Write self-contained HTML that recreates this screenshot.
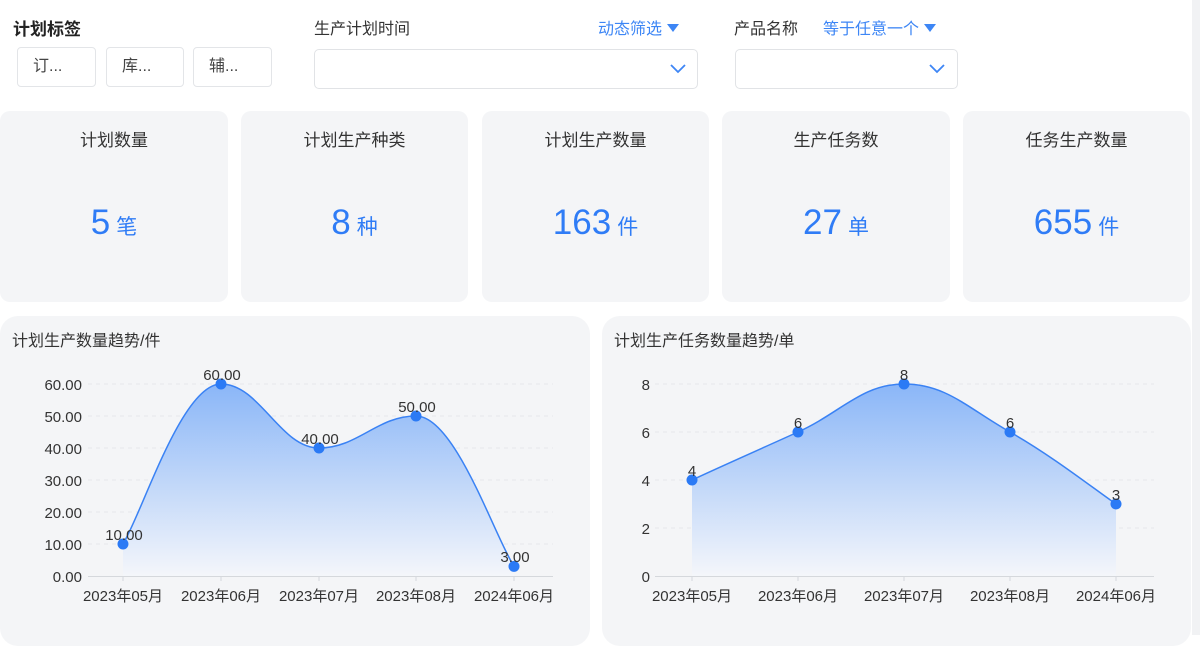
<!DOCTYPE html>
<html><head><meta charset="utf-8"><style>
*{margin:0;padding:0;box-sizing:border-box}
body{width:1200px;height:635px;overflow:hidden;background:#fff;font-family:"Liberation Sans","Noto Sans CJK SC",sans-serif;color:#333;position:relative}
.abs{position:absolute}
.tag{position:absolute;top:47px;height:40px;border:1px solid #e3e5e8;border-radius:4px;font-size:16px;color:#444;line-height:38px;padding-left:15px}
.sel{position:absolute;top:49px;height:40px;border:1px solid #e1e3e6;border-radius:5px;background:#fff}
.card{position:absolute;top:111px;height:191px;background:#f4f5f7;border-radius:10px;text-align:center}
.card .t{margin-top:15px;font-size:17px;color:#333}
.card .v{margin-top:52px;font-size:35px;color:#2f7cf6}
.card .v span{font-size:21px;margin-left:6px}
.panel{position:absolute;top:316px;height:330px;background:#f4f5f7;border-radius:18px}
svg text{font-family:"Liberation Sans","Noto Sans CJK SC",sans-serif}
.tri{display:inline-block;width:0;height:0;border-left:6px solid transparent;border-right:6px solid transparent;border-top:8px solid #3d86f5;margin-left:5px;vertical-align:2px}
</style></head><body>
<div class="abs" style="left:13px;top:15px;font-size:17px;font-weight:bold;color:#222">计划标签</div>
<div class="tag" style="left:17px;width:79px">订...</div>
<div class="tag" style="left:106px;width:78px">库...</div>
<div class="tag" style="left:193px;width:79px">辅...</div>
<div class="abs" style="left:314px;top:15px;font-size:16px;color:#333">生产计划时间</div>
<div class="abs" style="left:598px;top:15px;font-size:16px;color:#3d86f5">动态筛选<span class="tri"></span></div>
<div class="sel" style="left:314px;width:384px"><svg class="abs" style="left:355px;top:14px" width="16" height="10"><path d="M1 1 L8 8 L15 1" stroke="#3d86f5" stroke-width="1.8" fill="none"/></svg></div>
<div class="abs" style="left:734px;top:15px;font-size:16px;color:#333">产品名称</div>
<div class="abs" style="left:823px;top:15px;font-size:16px;color:#3d86f5">等于任意一个<span class="tri"></span></div>
<div class="sel" style="left:735px;width:223px"><svg class="abs" style="left:193px;top:14px" width="16" height="10"><path d="M1 1 L8 8 L15 1" stroke="#3d86f5" stroke-width="1.8" fill="none"/></svg></div>
<div class="abs" style="left:1192px;top:0;width:8px;height:635px;background:#f1f2f4"></div>

<div class="card" style="left:0;width:228px"><div class="t">计划数量</div><div class="v">5<span>笔</span></div></div>
<div class="card" style="left:241px;width:227px"><div class="t">计划生产种类</div><div class="v">8<span>种</span></div></div>
<div class="card" style="left:482px;width:227px"><div class="t">计划生产数量</div><div class="v">163<span>件</span></div></div>
<div class="card" style="left:722px;width:228px"><div class="t">生产任务数</div><div class="v">27<span>单</span></div></div>
<div class="card" style="left:963px;width:227px"><div class="t">任务生产数量</div><div class="v">655<span>件</span></div></div>

<div class="panel" style="left:0;width:590px"></div>
<div class="panel" style="left:602px;width:589px"></div>

<svg class="abs" style="left:0;top:0" width="1200" height="635">
<defs><linearGradient id="g" x1="0" y1="0" x2="0" y2="1"><stop offset="0" stop-color="#8ab6f8"/><stop offset="1" stop-color="#f4f6fa"/></linearGradient></defs>
<text x="12" y="346" font-size="16" fill="#333">计划生产数量趋势/件</text>
<text x="614" y="346" font-size="16" fill="#333">计划生产任务数量趋势/单</text>
<g stroke="#e6e8eb" stroke-dasharray="4 4" stroke-width="1">
<line x1="88" x2="553" y1="384" y2="384"/><line x1="88" x2="553" y1="416" y2="416"/><line x1="88" x2="553" y1="448" y2="448"/><line x1="88" x2="553" y1="480" y2="480"/><line x1="88" x2="553" y1="512" y2="512"/><line x1="88" x2="553" y1="544" y2="544"/>
<line x1="655" x2="1154" y1="384" y2="384"/><line x1="655" x2="1154" y1="432" y2="432"/><line x1="655" x2="1154" y1="480" y2="480"/><line x1="655" x2="1154" y1="528" y2="528"/>
</g>
<path d="M123 544 C142.6 512 181.8 384 221 384 C260 384 280 448 319 448 C358 448 377 416 416 416 C455 416 494.4 536 514 566.4 L514 576 L123 576Z" fill="url(#g)"/>
<path d="M123 544 C142.6 512 181.8 384 221 384 C260 384 280 448 319 448 C358 448 377 416 416 416 C455 416 494.4 536 514 566.4" fill="none" stroke="#3a82f4" stroke-width="1.5"/>
<path d="M692 480 C713 470 755.6 451.2 798 432 C840.4 412.8 862 384 904 384 C946 384 967.6 408 1010 432 C1052.4 456 1095 489.6 1116 504 L1116 576 L692 576Z" fill="url(#g)"/>
<path d="M692 480 C713 470 755.6 451.2 798 432 C840.4 412.8 862 384 904 384 C946 384 967.6 408 1010 432 C1052.4 456 1095 489.6 1116 504" fill="none" stroke="#3a82f4" stroke-width="1.5"/>
<g stroke="#d5d8dc"><line x1="88" x2="553" y1="576.5" y2="576.5"/><line x1="655" x2="1154" y1="576.5" y2="576.5"/>
<line x1="123" x2="123" y1="576" y2="581"/><line x1="221" x2="221" y1="576" y2="581"/><line x1="319" x2="319" y1="576" y2="581"/><line x1="416" x2="416" y1="576" y2="581"/><line x1="514" x2="514" y1="576" y2="581"/>
<line x1="692" x2="692" y1="576" y2="581"/><line x1="798" x2="798" y1="576" y2="581"/><line x1="904" x2="904" y1="576" y2="581"/><line x1="1010" x2="1010" y1="576" y2="581"/><line x1="1116" x2="1116" y1="576" y2="581"/></g>
<g fill="#2b7af5"><circle cx="123" cy="544" r="5.5"/><circle cx="221" cy="384" r="5.5"/><circle cx="319" cy="448" r="5.5"/><circle cx="416" cy="416" r="5.5"/><circle cx="514" cy="566.4" r="5.5"/>
<circle cx="692" cy="480" r="5.5"/><circle cx="798" cy="432" r="5.5"/><circle cx="904" cy="384" r="5.5"/><circle cx="1010" cy="432" r="5.5"/><circle cx="1116" cy="504" r="5.5"/></g>
<g font-size="15" fill="#333" text-anchor="end">
<text x="82" y="390">60.00</text><text x="82" y="422">50.00</text><text x="82" y="454">40.00</text><text x="82" y="486">30.00</text><text x="82" y="518">20.00</text><text x="82" y="550">10.00</text><text x="82" y="582">0.00</text>
<text x="650" y="390">8</text><text x="650" y="438">6</text><text x="650" y="486">4</text><text x="650" y="534">2</text><text x="650" y="582">0</text>
</g>
<g font-size="15" fill="#333" text-anchor="middle">
<text x="124" y="540">10.00</text><text x="222" y="380">60.00</text><text x="320" y="444">40.00</text><text x="417" y="412">50.00</text><text x="515" y="562">3.00</text>
<text x="692" y="476">4</text><text x="798" y="428">6</text><text x="904" y="380">8</text><text x="1010" y="428">6</text><text x="1116" y="500">3</text>
<text x="123" y="601">2023年05月</text><text x="221" y="601">2023年06月</text><text x="319" y="601">2023年07月</text><text x="416" y="601">2023年08月</text><text x="514" y="601">2024年06月</text>
<text x="692" y="601">2023年05月</text><text x="798" y="601">2023年06月</text><text x="904" y="601">2023年07月</text><text x="1010" y="601">2023年08月</text><text x="1116" y="601">2024年06月</text>
</g>
</svg>
</body></html>
